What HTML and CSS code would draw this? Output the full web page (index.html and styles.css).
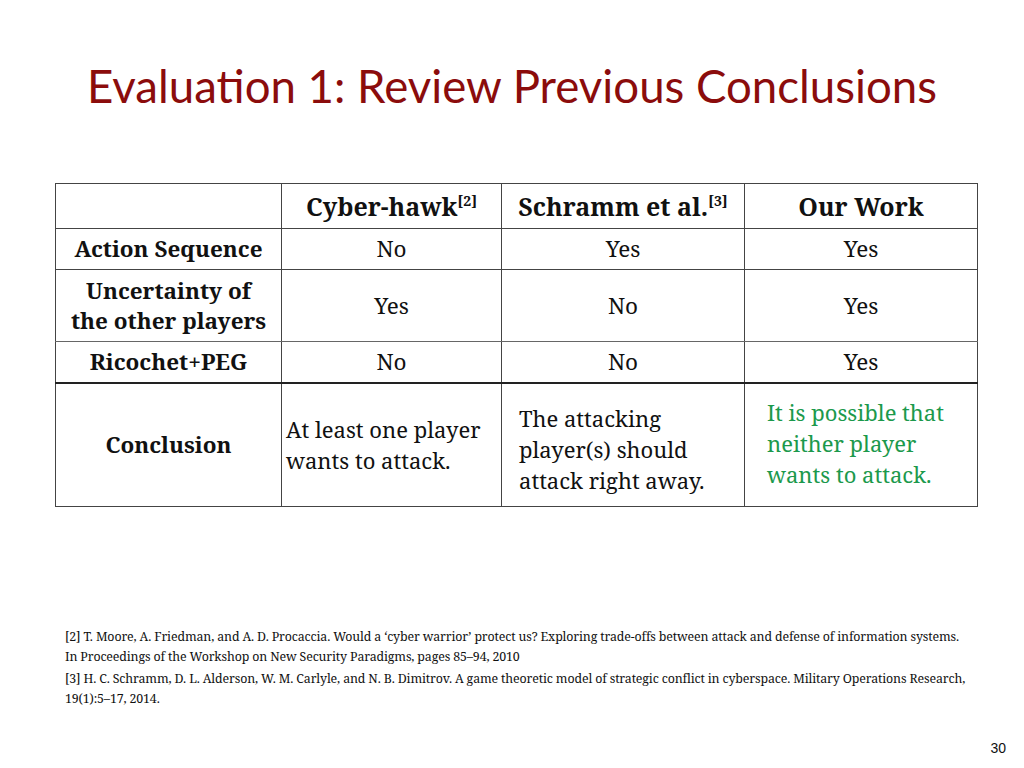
FILE: index.html
```html
<!DOCTYPE html>
<html>
<head>
<meta charset="utf-8">
<link rel="stylesheet" href="styles.css">
</head>
<body>
<div class="slide">
  <h1 class="title">Evaluation 1: Review Previous Conclusions</h1>
  <table class="cmp">
    <colgroup>
      <col class="c1"><col class="c2"><col class="c3"><col class="c4">
    </colgroup>
    <tr class="r-head">
      <th></th>
      <th>Cyber-hawk<sup>[2]</sup></th>
      <th>Schramm et al.<sup>[3]</sup></th>
      <th>Our Work</th>
    </tr>
    <tr class="r-a">
      <th>Action Sequence</th><td>No</td><td>Yes</td><td>Yes</td>
    </tr>
    <tr class="r-b">
      <th>Uncertainty of<br>the other players</th><td>Yes</td><td>No</td><td>Yes</td>
    </tr>
    <tr class="r-c">
      <th>Ricochet+PEG</th><td>No</td><td>No</td><td>Yes</td>
    </tr>
    <tr class="r-d">
      <th>Conclusion</th>
      <td class="txt">At least one player<br>wants to attack.</td>
      <td class="txt pad low">The attacking<br>player(s) should<br>attack right away.</td>
      <td class="txt pad green">It is possible that<br>neither player<br>wants to attack.</td>
    </tr>
  </table>
  <div class="refs">
    <p>[2] T. Moore, A. Friedman, and A. D. Procaccia. Would a ‘cyber warrior’ protect us? Exploring trade-offs between attack and defense of information systems.<br>In Proceedings of the Workshop on New Security Paradigms, pages 85–94, 2010</p>
    <p>[3] H. C. Schramm, D. L. Alderson, W. M. Carlyle, and N. B. Dimitrov. A game theoretic model of strategic conflict in cyberspace. Military Operations Research,<br>19(1):5–17, 2014.</p>
  </div>
  <div class="pagenum">30</div>
</div>
</body>
</html>
```
FILE: styles.css
```css
html, body { margin: 0; padding: 0; background: #fff; }
.slide {
  width: 1024px; height: 768px; position: relative; overflow: hidden;
  display: flex; flex-direction: column;
}
.title {
  margin: 58px 0 0 0;
  text-align: center;
  font-family: Lato, "Carlito", sans-serif;
  font-weight: 400;
  font-size: 45.6px;
  line-height: 56px;
  color: #8b0c0c;
  letter-spacing: 0;
}
.cmp {
  margin: 69px 0 0 55px;
  border-collapse: collapse;
  font-family: "Noto Serif", "DejaVu Serif", serif;
  color: #111;
  table-layout: fixed;
  width: 922px;
}
.c1 { width: 226px; } .c2 { width: 220px; } .c3 { width: 243px; } .c4 { width: 233px; }
.cmp th, .cmp td {
  border: 1px solid #444;
  text-align: center;
  padding: 0 4px;
  font-size: 22.5px;
  line-height: 30px;
  box-sizing: border-box;
}
.cmp th { font-weight: 700; }
.r-head { height: 45px; }
.r-head th { font-size: 25px; }
.r-head sup { font-size: 14px; vertical-align: 10px; line-height: 0; }
.r-a { height: 41px; }
.r-b { height: 72px; }
.r-c { height: 41px; }
.r-b th, .r-b td { border-color: #555 #444 #666; }
.r-c th, .r-c td { border-bottom: 2px solid #222; }
.r-d { height: 124px; }
.cmp td.txt { text-align: left; padding: 0 4px; line-height: 31px; font-size: 22px; }
.cmp td.pad { padding-left: 17px; }
.cmp td.low { padding-top: 9px; }
.cmp td.green { padding-left: 22px; padding-bottom: 3px; color: #1c994c; }
.refs {
  margin: 120px 0 0 65px;
  width: 930px;
  font-family: "Noto Serif", "DejaVu Serif", serif;
  font-size: 12.4px;
  letter-spacing: -0.14px;
  line-height: 20px;
  color: #111;
}
.refs p { margin: 0 0 2px 0; white-space: nowrap; }
.pagenum {
  position: absolute; right: 18px; bottom: 12px;
  font-family: "Liberation Sans", Arial, sans-serif;
  font-size: 14px; color: #111;
}
```
